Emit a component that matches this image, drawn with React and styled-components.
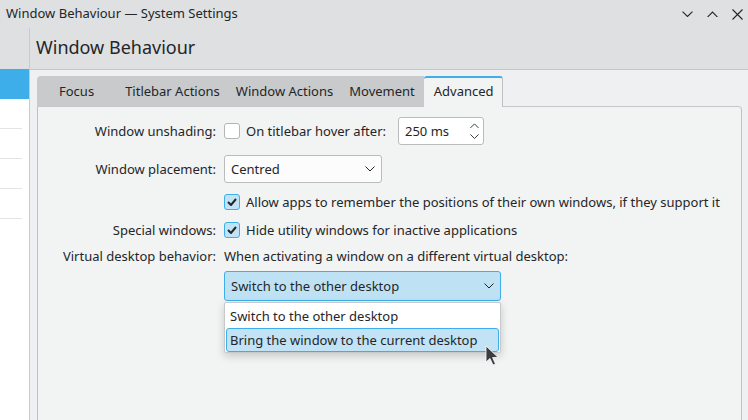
import React from 'react';
import styled, { createGlobalStyle } from 'styled-components';

const GlobalStyle = createGlobalStyle`
	html, body {
		margin: 0;
		padding: 0;
		width: 748px;
		height: 420px;
		overflow: hidden;
		background: #eff0f1;
		font-family: 'Noto Sans', 'DejaVu Sans', sans-serif;
		font-size: 13px;
		color: #232629;
	}
`;

const Window = styled.div`
	display: flex;
	flex-direction: column;
	width: 748px;
	height: 420px;
	overflow: hidden;
`;

const TitleBar = styled.div`
	display: flex;
	align-items: center;
	justify-content: space-between;
	height: 28px;
	padding: 0 4px 0 6px;
	background: #dee0e2;
	flex-shrink: 0;
`;

const TitleText = styled.span`
	font-size: 13px;
	line-height: 1;
	margin-top: -1px;
`;

const Controls = styled.div`
	display: flex;
	align-items: center;
	gap: 14px;
	padding-right: 1px;
`;

const Main = styled.div`
	display: flex;
	flex: 1;
	min-height: 0;
`;

const Sidebar = styled.div`
	width: 29px;
	flex-shrink: 0;
	display: flex;
	flex-direction: column;
	background: #ffffff;
	border-right: 1px solid #c9cacc;
`;

const SideTop = styled.div`
	height: 41px;
	background: #dee0e2;
`;

const SideItem = styled.div`
	height: ${p => (p.$active ? 30 : 29)}px;
	background: ${p => (p.$active ? '#3daee9' : '#ffffff')};
	border-bottom: ${p => (p.$active ? 'none' : '1px solid #e3e4e5')};
	margin-right: ${p => (p.$active ? 0 : 7)}px;
`;

const Content = styled.div`
	flex: 1;
	display: flex;
	flex-direction: column;
	min-width: 0;
`;

const Header = styled.div`
	height: 42px;
	box-sizing: border-box;
	display: flex;
	align-items: center;
	padding: 0 0 3px 6px;
	background: #dee0e2;
	border-bottom: 1px solid #c5c6c8;
	font-size: 18px;
	flex-shrink: 0;
`;

const Body = styled.div`
	flex: 1;
	padding: 6px 6px 0 7px;
	background: #eff0f1;
	display: flex;
	flex-direction: column;
`;

const TabBar = styled.div`
	display: flex;
	height: 30px;
	align-items: stretch;
	position: relative;
	z-index: 1;
`;

const TabGroup = styled.div`
	display: flex;
	background: #c9cacc;
	border-radius: 4px 0 0 0;
	padding-left: 3px;
	padding-right: 1px;
`;

const Tab = styled.div`
	display: flex;
	align-items: center;
	padding: 0 ${p => p.$right || 8}px 0 ${p => p.$left || 8}px;
	font-size: 13px;
	white-space: nowrap;
`;

const ActiveTab = styled.div`
	display: flex;
	align-items: center;
	padding: 0 10px 3px 10px;
	width: 79px;
	box-sizing: border-box;
	background: #f2f3f3;
	border-top: 2px solid #3daee9;
	border-right: 1px solid #c0c1c3;
	border-radius: 3px 3px 0 0;
	margin-bottom: -1px;
	font-size: 13px;
`;

const Panel = styled.div`
	flex: 1;
	position: relative;
	background: #f2f3f3;
	border: 1px solid #c0c1c3;
	border-top-color: #c6c7c9;
	border-radius: 0 4px 0 0;
	border-bottom: none;
`;

const Form = styled.div`
	display: grid;
	grid-template-columns: 178px auto;
	grid-template-rows: 38px 38px 28px 28px 24px 36px;
	column-gap: 7px;
	padding-top: 5px;
	align-items: center;
`;

const Label = styled.div`
	text-align: right;
	white-space: nowrap;
`;

const Field = styled.div`
	display: flex;
	align-items: center;
	gap: 6px;
	white-space: nowrap;
	position: relative;
	padding-left: 1px;
`;

const Check = styled.span`
	width: 16px;
	height: 16px;
	box-sizing: border-box;
	border-radius: 3px;
	border: 1px solid ${p => (p.$checked ? '#3daee9' : '#b4b5b7')};
	background: ${p => (p.$checked ? '#c1e3f5' : '#ffffff')};
	display: inline-flex;
	align-items: center;
	justify-content: center;
	flex-shrink: 0;
`;

const SpinBox = styled.div`
	width: 86px;
	height: 28px;
	box-sizing: border-box;
	margin-left: 6px;
	border: 1px solid #babbbd;
	border-radius: 3px;
	background: #ffffff;
	display: flex;
	align-items: center;
	justify-content: space-between;
	padding: 0 4px 0 6px;
`;

const Arrows = styled.div`
	display: flex;
	flex-direction: column;
	gap: 6px;
`;

const Combo = styled.div`
	width: ${p => p.$w}px;
	height: ${p => p.$h || 28}px;
	box-sizing: border-box;
	border: 1px solid ${p => (p.$focus ? '#3daee9' : '#babbbd')};
	border-radius: 3px;
	background: ${p => (p.$focus ? '#bee2f4' : '#fcfcfc')};
	display: flex;
	align-items: center;
	justify-content: space-between;
	padding: 0 6px 0 6px;
`;

const Popup = styled.div`
	position: absolute;
	left: 1px;
	top: 31px;
	width: 277px;
	box-sizing: border-box;
	background: #ffffff;
	border: 1px solid #c8c9cb;
	border-radius: 2px;
	box-shadow: 0 3px 8px rgba(0, 0, 0, 0.18);
	padding: 1px 1px 0 1px;
	z-index: 5;
`;

const Item = styled.div`
	height: 24px;
	box-sizing: border-box;
	display: flex;
	align-items: center;
	padding-left: 3px;
	border-radius: 3px;
	border: 1px solid ${p => (p.$hl ? '#3daee9' : 'transparent')};
	background: ${p => (p.$hl ? '#c1e3f5' : 'transparent')};
`;

const Cursor = styled.svg`
	position: absolute;
	left: 262px;
	top: 74px;
	z-index: 6;
`;

const Chevron = ({ dir = 'down', size = 10, color = '#232629' }) => (
	<svg width={size} height={size * 0.6} viewBox="0 0 10 6">
		<path
			d={dir === 'down' ? 'M0.5 0.5 L5 5 L9.5 0.5' : 'M0.5 5.5 L5 1 L9.5 5.5'}
			fill="none"
			stroke={color}
			strokeWidth="1"
		/>
	</svg>
);

const CheckMark = () => (
	<svg width="10" height="8" viewBox="0 0 10 8">
		<path d="M1 4 L4 7 L9 1" fill="none" stroke="#232629" strokeWidth="2" />
	</svg>
);

const App = () => (
	<Window>
		<GlobalStyle />
		<TitleBar>
			<TitleText>Window Behaviour — System Settings</TitleText>
			<Controls>
				<Chevron dir="down" size={11} />
				<Chevron dir="up" size={11} />
				<svg width="11" height="11" viewBox="0 0 11 11">
					<path d="M0.5 0.5 L10.5 10.5 M10.5 0.5 L0.5 10.5" stroke="#232629" strokeWidth="1.1" />
				</svg>
			</Controls>
		</TitleBar>
		<Main>
			<Sidebar>
				<SideTop />
				<SideItem $active />
				<SideItem />
				<SideItem />
				<SideItem />
				<SideItem />
			</Sidebar>
			<Content>
				<Header>Window Behaviour</Header>
				<Body>
					<TabBar>
						<TabGroup>
							<Tab $left={19} $right={23}>Focus</Tab>
							<Tab>Titlebar Actions</Tab>
							<Tab>Window Actions</Tab>
							<Tab>Movement</Tab>
						</TabGroup>
						<ActiveTab>Advanced</ActiveTab>
					</TabBar>
					<Panel>
						<Form>
							<Label>Window unshading:</Label>
							<Field>
								<Check />
								<span>On titlebar hover after:</span>
								<SpinBox>
									<span>250 ms</span>
									<Arrows>
										<Chevron dir="up" size={9} />
										<Chevron dir="down" size={9} />
									</Arrows>
								</SpinBox>
							</Field>

							<Label>Window placement:</Label>
							<Field>
								<Combo $w={158}>
									<span>Centred</span>
									<Chevron />
								</Combo>
							</Field>

							<Label />
							<Field>
								<Check $checked>
									<CheckMark />
								</Check>
								<span>Allow apps to remember the positions of their own windows, if they support it</span>
							</Field>

							<Label>Special windows:</Label>
							<Field>
								<Check $checked>
									<CheckMark />
								</Check>
								<span>Hide utility windows for inactive applications</span>
							</Field>

							<Label>Virtual desktop behavior:</Label>
							<Field>
								<span>When activating a window on a different virtual desktop:</span>
							</Field>

							<Label />
							<Field>
								<Combo $w={277} $h={30} $focus>
									<span>Switch to the other desktop</span>
									<Chevron />
								</Combo>
								<Popup>
									<Item>Switch to the other desktop</Item>
									<Item $hl>Bring the window to the current desktop</Item>
								</Popup>
								<Cursor width="16" height="22" viewBox="0 0 16 22">
									<path
										d="M1 1 L1 17 L5 13.5 L8 20 L10.5 19 L7.6 12.6 L13 12.3 Z"
										fill="#3b3c3e"
										stroke="#ffffff"
										strokeWidth="0.8"
										strokeLinejoin="round"
									/>
								</Cursor>
							</Field>
						</Form>
					</Panel>
				</Body>
			</Content>
		</Main>
	</Window>
);

export default App;
